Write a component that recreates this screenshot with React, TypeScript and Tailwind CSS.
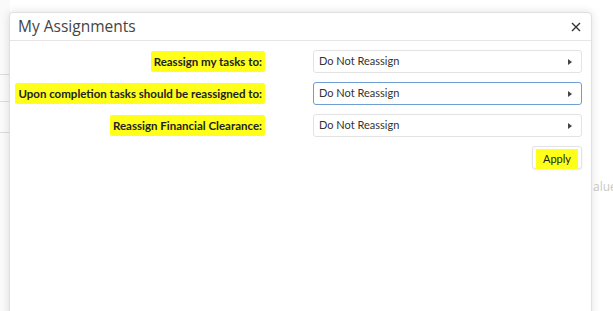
import React from "react";

const font = { fontFamily: '"Open Sans", "Noto Sans", Arial, sans-serif' };
const lato = { fontFamily: 'Lato, "Open Sans", Arial, sans-serif' };

function Select({ focused }: { focused?: boolean }) {
  return (
    <div
      style={lato}
      className={`flex h-[23px] w-[269px] items-center justify-between rounded-[3px] border bg-white pl-[5px] pr-[9px] text-[11px] text-[#333] ${
        focused ? "border-[#6f9fd2]" : "border-[#e3e3e3]"
      }`}
    >
      <span>Do Not Reassign</span>
      <svg width="4" height="6" viewBox="0 0 4 6">
        <path d="M0 0 L4 3 L0 6 Z" fill="#444" />
      </svg>
    </div>
  );
}

function Label({ children }: { children: React.ReactNode }) {
  return (
    <span
      style={lato}
      className="whitespace-nowrap rounded-[2px] bg-[#ffff1a] px-[3px] py-[2px] text-[11.5px] font-bold text-[#222]"
    >
      {children}
    </span>
  );
}

export default function App() {
  return (
    <div className="relative h-[311px] w-[613px] overflow-hidden bg-white" style={font}>
      {/* background page hints */}
      <div className="absolute left-0 top-0 flex h-full w-[10px] flex-col bg-[#fafafa]">
        <div className="mt-[74px] h-px bg-[#dcdcdc]" />
        <div className="mt-[26px] h-px bg-[#dcdcdc]" />
        <div className="mt-[30px] h-px bg-[#dcdcdc]" />
      </div>
      <div className="absolute left-[593px] top-[178px] text-[12px] text-[#c8c8c8]">alue</div>

      <div className="absolute left-[9px] top-[12px] flex h-[320px] w-[583px] flex-col rounded-[4px] border border-[#e0e0e0] bg-white shadow-[0_0_10px_rgba(0,0,0,0.12)]">
        <div className="flex h-[28px] items-center justify-between border-b border-[#e6e6e6] pl-[8px] pr-[10px]">
          <span className="text-[15.5px] text-[#444]">My Assignments</span>
          <svg width="10" height="10" viewBox="0 0 10 10">
            <path d="M1 1 L9 9 M9 1 L1 9" stroke="#333" strokeWidth="1.4" />
          </svg>
        </div>
        <div className="flex flex-col gap-[9px] pl-[5px] pr-[9px] pt-[9px]">
          <div className="flex items-center">
            <div className="flex w-[250px] justify-end">
              <Label>Reassign my tasks to:</Label>
            </div>
            <div className="ml-auto">
              <Select />
            </div>
          </div>
          <div className="flex items-center">
            <div className="flex w-[250px] justify-end">
              <Label>Upon completion tasks should be reassigned to:</Label>
            </div>
            <div className="ml-auto">
              <Select focused />
            </div>
          </div>
          <div className="flex items-center">
            <div className="flex w-[250px] justify-end">
              <Label>Reassign Financial Clearance:</Label>
            </div>
            <div className="ml-auto">
              <Select />
            </div>
          </div>
          <div className="flex justify-end">
            <div className="flex h-[23px] items-center rounded-[3px] border border-[#e3e3e3] bg-white px-[3px] pt-[3px] shadow-[0_1px_2px_rgba(0,0,0,0.08)]">
              <span style={lato} className="bg-[#ffff1a] px-[7px] py-[2px] text-[11px] text-[#222]">Apply</span>
            </div>
          </div>
        </div>
      </div>
    </div>
  );
}
